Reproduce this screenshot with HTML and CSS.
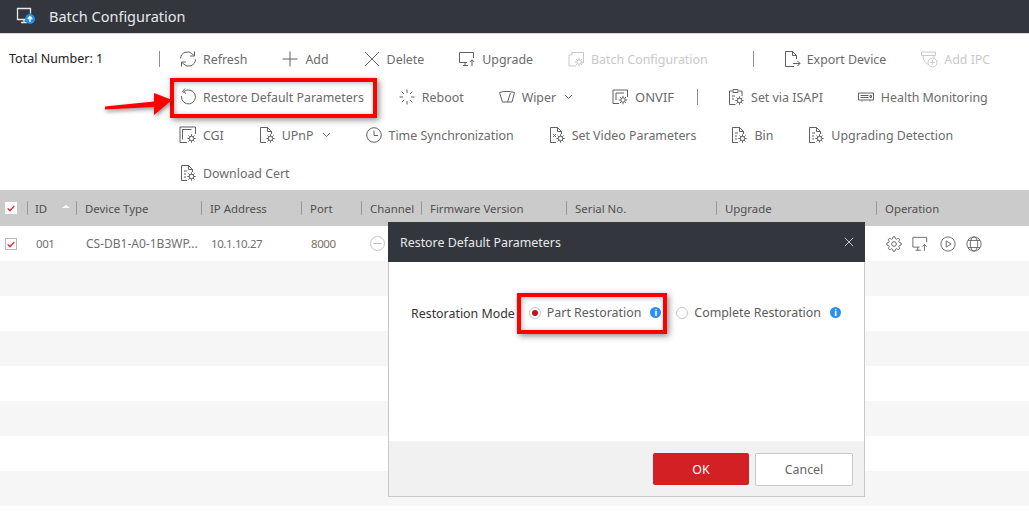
FILE: index.html
```html
<!DOCTYPE html>
<html lang="en">
<head>
<meta charset="utf-8">
<title>Batch Configuration</title>
<link rel="stylesheet" href="styles.css">
</head>
<body>
<svg class="defs" width="0" height="0">
  <defs>
    <symbol id="gear" viewBox="0 0 10 10">
      <circle cx="5" cy="5" r="2.2" fill="#fff"/>
      <path d="M5 .8v1.9M5 7.3v1.900M.8 5h1.900M7.300 5h1.900M2 2l1.400 1.400M6.600 6.600 8 8M8 2 6.600 3.400M3.400 6.600 2 8" fill="none"/>
    </symbol>
  </defs>
</svg>
<div class="page">
  <header class="titlebar">
    <svg class="title-icon" width="20" height="20" viewBox="0 0 20 20"><path d="M10 12.500H1.500V1.500h13v5M5 15.500h6M8 12.500v3" fill="none" stroke="#e4e6e9" stroke-width="1.300"/><circle cx="14" cy="12" r="5" fill="#1e8fe6"/><path d="M14 15V10M11.800 12 14 9.600l2.200 2.400" fill="none" stroke="#fff" stroke-width="1.400"/></svg>
    <span class="title-text">Batch Configuration</span>
  </header>

  <section class="toolbar">
    <div class="total">
      <span>Total Number: 1</span>
      <i class="vsep total-sep"></i>
    </div>
    <div class="tools">
      <div class="tool-row">
        <div class="tool"><svg class="ic" viewBox="0 0 18 18"><path d="M1.500 8.500a7 7 0 0 1 12-4.500l1.500 1.500M16.500 9.500a7 7 0 0 1-12 4.500L3 12.500M15.500 1.500V6H11M2.500 16.500V12H7"/></svg><span>Refresh</span></div>
        <div class="tool"><svg class="ic" viewBox="0 0 18 18"><path d="M9 1.500v15M1.500 9h15"/></svg><span>Add</span></div>
        <div class="tool"><svg class="ic" viewBox="0 0 18 18"><path d="m2 2 14 14M16 2 2 16"/></svg><span>Delete</span></div>
        <div class="tool"><svg class="ic" viewBox="0 0 18 18"><path d="M9 12.500H1.500v-10h14V8M5 15.500h5M7 12.500v3M14 16v-6M11.800 12 14 9.800l2.200 2.200"/></svg><span>Upgrade</span></div>
        <div class="tool off"><svg class="ic" viewBox="0 0 18 18"><path d="M5 5V2.500h11.500V13H14M5 5H2v11h7"/><use href="#gear" x="7" y="7" width="10" height="10"/></svg><span>Batch Configuration</span></div>
        <i class="vsep sep-export"></i>
        <div class="tool"><svg class="ic" viewBox="0 0 18 18"><path d="M11 16.500H2.500v-15h7l4 4V9M9.500 1.500v4h4M10 13.500h7M14.500 11l2.500 2.500-2.500 2.500"/></svg><span>Export Device</span></div>
        <div class="tool off"><svg class="ic" viewBox="0 0 18 18"><path d="M1.500 2h14v3.500h-14zM3 5.500c0 4 1.500 7 4.500 8.500M14 5.500V8"/><circle cx="12.500" cy="12.500" r="4.500"/><path d="M12.500 10.200v4.600M10.200 12.500h4.600"/></svg><span>Add IPC</span></div>
      </div>
      <div class="tool-row">
        <div class="tool"><svg class="ic" viewBox="0 0 18 18"><path d="M5 3.500A7 7 0 1 1 2.500 8M6 .5 3.500 3.500 7 5.500"/></svg><span>Restore Default Parameters</span></div>
        <div class="tool"><svg class="ic" viewBox="0 0 18 18"><path d="M9 1.500v3.500M9 13v3.500M1.500 9H5M13 9h3.500M3.700 3.700l2.400 2.400M11.900 11.900l2.400 2.400M14.300 3.700l-2.400 2.400M6.100 11.900l-2.400 2.400"/></svg><span>Reboot</span></div>
        <div class="tool wiper"><svg class="ic" viewBox="0 0 18 18"><path d="M1.500 4.500c5-1.500 10-1.500 15 0l-2.500 9.500H4.500zM9.500 14l3-9"/></svg><span>Wiper</span><svg class="chev" viewBox="0 0 9 6"><path d="m1 1 3.500 3.500L8 1"/></svg></div>
        <div class="tool"><svg class="ic" viewBox="0 0 18 18"><path d="M2 15.500V2h14.500v7M2 15.500h6M5 12V5h8"/><use href="#gear" x="7" y="7" width="10" height="10"/></svg><span class="onvif">ONVIF</span></div>
        <i class="vsep sep-isapi"></i>
        <div class="tool"><svg class="ic" viewBox="0 0 18 18"><path d="M5.500 3H2.500v13.500h6M12 3h3v5M6 1.500h5V4.500H6zM5 8h3M5 11h2"/><use href="#gear" x="7.500" y="7.500" width="10" height="10"/></svg><span>Set via ISAPI</span></div>
        <div class="tool"><svg class="ic" viewBox="0 0 18 18"><path d="M1.500 5h15v7h-15zM3.500 7.500h8M3.500 9.500h8M13 7.500h1.500v2H13zM5 12.500v1M13 12.500v1"/></svg><span>Health Monitoring</span></div>
      </div>
      <div class="tool-row">
        <div class="tool"><svg class="ic" viewBox="0 0 18 18"><path d="M1 1h15.500v7M1 1v15.500h7M3.500 3.500h9M3.500 3.500v10"/><use href="#gear" x="7.500" y="7.500" width="10" height="10"/></svg><span>CGI</span></div>
        <div class="tool"><svg class="ic" viewBox="0 0 18 18"><path d="M8 16.500H2.500v-15h7l4 4V8M9.500 1.500v4h4"/><use href="#gear" x="7.500" y="7.500" width="10" height="10"/></svg><span>UPnP</span><svg class="chev" viewBox="0 0 9 6"><path d="m1 1 3.500 3.500L8 1"/></svg></div>
        <div class="tool"><svg class="ic" viewBox="0 0 18 18"><circle cx="9" cy="9" r="7.300"/><path d="M9 4.500V9.500h4"/></svg><span>Time Synchronization</span></div>
        <div class="tool"><svg class="ic" viewBox="0 0 18 18"><path d="M8 16.500H2.500v-15h7l4 4V8M9.500 1.500v4h4M5 8l3 3M8 8l-3 3"/><use href="#gear" x="7.500" y="7.500" width="10" height="10"/></svg><span>Set Video Parameters</span></div>
        <div class="tool"><svg class="ic" viewBox="0 0 18 18"><path d="M8 16.500H2.500v-15h7l4 4V8M9.500 1.500v4h4M5 7h3M5 10h2M5 13h2"/><use href="#gear" x="7.500" y="7.500" width="10" height="10"/></svg><span>Bin</span></div>
        <div class="tool"><svg class="ic" viewBox="0 0 18 18"><path d="M8 16.500H2.500v-15h7l4 4V8M9.500 1.500v4h4M5 7h3M5 10h2M5 13h2"/><use href="#gear" x="7.500" y="7.500" width="10" height="10"/></svg><span>Upgrading Detection</span></div>
      </div>
      <div class="tool-row">
        <div class="tool"><svg class="ic" viewBox="0 0 18 18"><path d="M8 16.500H2.500v-15h7l4 4V8M9.500 1.500v4h4M5 7h3M5 10h2M5 13h2"/><use href="#gear" x="7.500" y="7.500" width="10" height="10"/></svg><span>Download Cert</span></div>
      </div>
    </div>
  </section>

  <section class="table">
    <div class="grid head">
      <div class="check-cell"><span class="check head-check"><svg viewBox="0 0 12 12"><path d="m2 6.500 2.800 2.800L10 3.500"/></svg></span></div>
      <div class="hc id-head">ID<i class="sort"></i></div>
      <div class="hc">Device Type</div>
      <div class="hc">IP Address</div>
      <div class="hc">Port</div>
      <div class="hc">Channel</div>
      <div class="hc">Firmware Version</div>
      <div class="hc">Serial No.</div>
      <div class="hc">Upgrade</div>
      <div class="hc">Operation</div>
    </div>
    <div class="grid row">
      <div class="check-cell"><span class="check"><svg viewBox="0 0 12 12"><path d="m2 6.500 2.800 2.800L10 3.500"/></svg></span></div>
      <div class="c num id-cell">001</div>
      <div class="c">CS-DB1-A0-1B3WP...</div>
      <div class="c num">10.1.10.27</div>
      <div class="c num port">8000</div>
      <div class="c channel"><svg class="minus" viewBox="0 0 15 15"><circle cx="7.500" cy="7.500" r="7"/><path d="M3.500 7.500h8"/></svg></div>
      <div class="c"></div>
      <div class="c"></div>
      <div class="c"></div>
      <div class="c ops">
        <svg class="op" viewBox="0 0 24 24"><circle cx="12" cy="12" r="3.500"/><path d="M19.400 15a1.650 1.650 0 0 0 .33 1.820l.06.06a2 2 0 0 1 0 2.830 2 2 0 0 1-2.830 0l-.06-.06a1.650 1.650 0 0 0-1.820-.33 1.650 1.650 0 0 0-1 1.510V21a2 2 0 0 1-2 2 2 2 0 0 1-2-2v-.09A1.650 1.650 0 0 0 9 19.400a1.650 1.650 0 0 0-1.820.33l-.06.06a2 2 0 0 1-2.830 0 2 2 0 0 1 0-2.830l.06-.06a1.650 1.650 0 0 0 .33-1.820 1.650 1.650 0 0 0-1.510-1H3a2 2 0 0 1-2-2 2 2 0 0 1 2-2h.09A1.650 1.650 0 0 0 4.600 9a1.650 1.650 0 0 0-.33-1.820l-.06-.06a2 2 0 0 1 0-2.830 2 2 0 0 1 2.830 0l.06.06a1.650 1.650 0 0 0 1.820.33H9a1.650 1.650 0 0 0 1-1.510V3a2 2 0 0 1 2-2 2 2 0 0 1 2 2v.09a1.650 1.650 0 0 0 1 1.510 1.650 1.650 0 0 0 1.820-.33l.06-.06a2 2 0 0 1 2.830 0 2 2 0 0 1 0 2.830l-.06.06a1.650 1.650 0 0 0-.33 1.820V9a1.650 1.650 0 0 0 1.510 1H21a2 2 0 0 1 2 2 2 2 0 0 1-2 2h-.09a1.650 1.650 0 0 0-1.510 1z"/></svg>
        <svg class="op" viewBox="0 0 18 18"><path d="M8.500 12.500H1v-11h15.500V7M4 16h6M6.500 12.500V16M14 16.500V9.500M11.500 12 14 9.500l2.500 2.500"/></svg>
        <svg class="op op-play" viewBox="0 0 18 18"><circle cx="9" cy="9" r="8"/><path d="M7 5.500v7l5.500-3.500z"/></svg>
        <svg class="op" viewBox="0 0 18 18"><circle cx="9" cy="9" r="8"/><ellipse cx="9" cy="9" rx="4.200" ry="8"/><path d="M2.200 5h13.600M2.200 13h13.600"/></svg>
      </div>
    </div>
    <div class="band alt"></div>
    <div class="band"></div>
    <div class="band alt"></div>
    <div class="band"></div>
    <div class="band alt"></div>
    <div class="band"></div>
    <div class="band alt"></div>
  </section>

  <div class="dialog">
    <div class="dlg-head">
      <span>Restore Default Parameters</span>
      <svg class="dlg-close" viewBox="0 0 10 10"><path d="m.8.8 8.400 8.400M9.200.8.800 9.200"/></svg>
    </div>
    <div class="dlg-body">
      <span class="mode-label">Restoration Mode</span>
      <span class="radio on"></span>
      <span class="opt">Part Restoration</span>
      <span class="info">i</span>
      <span class="radio"></span>
      <span class="opt">Complete Restoration</span>
      <span class="info">i</span>
    </div>
    <div class="dlg-foot">
      <button class="btn ok" type="button">OK</button>
      <button class="btn cancel" type="button">Cancel</button>
    </div>
  </div>

  <div class="mark mark-restore"></div>
  <div class="mark mark-part"></div>
  <svg class="arrow" width="72" height="36" viewBox="0 0 72 36"><path d="M1 20.500 50 15.500V7L68 14 50 29V21L1 23.500z" fill="#f00"/></svg>
</div>
</body>
</html>
```
FILE: styles.css
```css
* { box-sizing: border-box; }
html, body { margin: 0; padding: 0; background: #fff; }
.defs { position: absolute; }
.page {
  position: relative;
  width: 1029px;
  height: 521px;
  overflow: hidden;
  font-family: "Noto Sans", "Open Sans", sans-serif;
  font-size: 12px;
  color: #666;
}
.titlebar {
  height: 34px;
  background: #33363c;
  border-bottom: 1px solid #d9d9d9;
  display: flex;
  align-items: center;
  padding-left: 16px;
  color: #e6e8eb;
}
.title-icon { margin-right: 13px; flex: none; }
.title-text { font-size: 14.5px; margin-top: -2px; }

.toolbar { display: flex; height: 156px; padding-top: 6px; background: #fff; }
.total {
  width: 179px;
  flex: none;
  height: 38px;
  display: flex;
  align-items: center;
  padding-left: 9px;
  color: #222;
  font-size: 12.5px;
  position: relative;
}
.total span { margin-top: -2px; }
.total-sep { margin-left: 56px; }
.vsep { display: block; flex: none; width: 1px; height: 16px; background: #8f8f8f; }
.tools { flex: 1; }
.tool-row { display: flex; align-items: center; height: 38px; gap: 34px; }
.tool { display: flex; align-items: center; color: #6b6b6b; white-space: nowrap; font-size: 12.4px; }
.tool.off { color: #c9c9c9; }
.ic { width: 18px; height: 18px; margin-right: 6px; flex: none; fill: none; stroke: #606060; stroke-width: 1; overflow: visible; }
.ic use { stroke: #606060; }
.tool.off .ic, .tool.off .ic use { stroke: #c9c9c9; }
.chev { width: 9px; height: 6px; margin-left: 8px; fill: none; stroke: #666; stroke-width: 1; }
.wiper { margin-right: 4px; }
.onvif { font-size: 13px; }
.sep-export { margin: 0 -5px 0 11px; }
.sep-isapi { margin: 0 -5px 0 -11px; }

.table { background: #fff; }
.grid {
  display: grid;
  grid-template-columns: 27px 49px 125px 100px 60px 60px 145px 150px 160px 153px;
  align-items: center;
}
.head { height: 36px; background: #cbcbcb; color: #555; }
.row { height: 35px; background: #fff; }
.hc {
  height: 14px;
  line-height: 16px;
  border-left: 1px solid #9a9a9a;
  padding-left: 8px;
  white-space: nowrap;
  color: #4f4f4f;
  font-size: 11.4px;
}
.id-head { position: relative; padding-left: 7px; }
.sort {
  position: absolute;
  left: 34px;
  top: 4px;
  border: 4px solid transparent;
  border-top: 0;
  border-bottom: 3px solid #fff;
}
.check-cell { padding-left: 5px; display: flex; align-items: center; }
.check {
  width: 12px;
  height: 12px;
  border: 1px solid #b5b5b5;
  background: #fff;
  display: block;
}
.head-check { border-color: #fff; }
.check svg { display: block; width: 10px; height: 10px; fill: none; stroke: #e01f2b; stroke-width: 1.5; }
.c { padding-left: 10px; white-space: nowrap; color: #6f6f6f; font-size: 12px; display: flex; align-items: center; }
.num { font-size: 11.5px; letter-spacing: -.4px; }
.id-cell { padding-left: 9px; }
.channel { padding-left: 9px; }
.port { color: #7a6f62; }
.minus { width: 15px; height: 15px; fill: none; stroke: #c4c4c4; stroke-width: 1; }
.ops { gap: 10px; }
.op { width: 16px; height: 16px; flex: none; fill: none; stroke: #5f5f5f; stroke-width: 1; }
.op:first-child { stroke-width: 1.4; }
.op-play { margin-left: 2px; }
.band { height: 35px; background: #fff; }
.band.alt { background: #f6f6f6; }

.dialog {
  position: absolute;
  left: 388px;
  top: 222px;
  width: 477px;
  height: 275px;
  display: flex;
  flex-direction: column;
  background: #fff;
  border: 1px solid #c9c9c9;
  border-top: 0;
}
.dlg-head {
  height: 40px;
  margin: 0 -1px;
  background: #33363c;
  color: #e6e8eb;
  display: flex;
  align-items: center;
  justify-content: space-between;
  padding: 0 11px 0 12px;
  font-size: 12.4px;
  flex: none;
}
.dlg-close { width: 10px; height: 10px; fill: none; stroke: #c5c7ca; stroke-width: 1; }
.dlg-body {
  flex: 1;
  display: flex;
  align-items: flex-start;
  padding: 42px 0 0 22px;
  font-size: 12.4px;
}
.mode-label { color: #333; margin-top: 1px; margin-right: 14px; line-height: 18px; white-space: nowrap; }
.opt { color: #5d5d5d; line-height: 18px; white-space: nowrap; margin-right: 9px; }
.radio {
  width: 12px;
  height: 12px;
  margin: 3px 6px 0 0;
  border: 1px solid #c6c6c6;
  border-radius: 50%;
  background: #fff;
  flex: none;
  display: flex;
  align-items: center;
  justify-content: center;
}
.radio.on::after { content: ""; width: 6px; height: 6px; border-radius: 50%; background: #c50f1f; }
.info {
  width: 11px;
  height: 11px;
  margin: 3px 15px 0 0;
  border-radius: 50%;
  background: #2a8fef;
  color: #fff;
  font-size: 9px;
  line-height: 11px;
  font-weight: 700;
  text-align: center;
  flex: none;
}
.dlg-foot {
  height: 55px;
  background: #f1f1f1;
  display: flex;
  justify-content: flex-end;
  align-items: center;
  gap: 6px;
  padding: 1px 11px 0 0;
  flex: none;
}
.btn { font: inherit; font-size: 12.4px; height: 33px; border-radius: 2px; padding: 0; }
.ok { width: 96px; height: 32px; background: #d32025; color: #fff; border: 0; }
.cancel { width: 98px; background: #fff; color: #666; border: 1px solid #c9c9c9; }

.mark {
  position: absolute;
  border: 4px solid #f00;
  box-shadow: 2px 2px 6px rgba(0, 0, 0, .45), inset 1px 1px 5px rgba(0, 0, 0, .3);
}
.mark-restore { left: 170px; top: 78px; width: 207px; height: 40px; }
.mark-part { left: 517px; top: 293px; width: 150px; height: 41px; }
.arrow {
  position: absolute;
  left: 104px;
  top: 86px;
  filter: drop-shadow(1px 2px 2px rgba(0, 0, 0, .45));
}
```
